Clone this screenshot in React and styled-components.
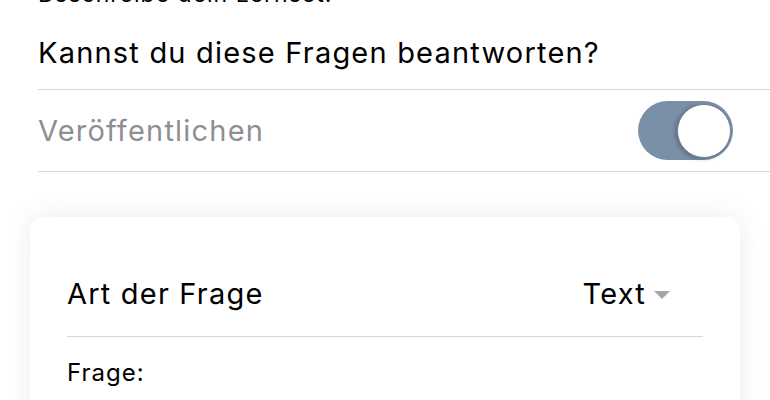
import React from "react";
import styled, { createGlobalStyle } from "styled-components";

const Global = createGlobalStyle`
  html, body { margin: 0; padding: 0; background: #ffffff; }
  body { font-family: Inter, "Noto Sans", sans-serif; color: #000; overflow: hidden; }
`;

const Page = styled.div`
  width: 770px;
  height: 400px;
  overflow: hidden;
`;

const Form = styled.div`
  padding-left: 38px;
  margin-top: -20px;
`;

const Caption = styled.div`
  font-size: 23px;
  line-height: 28px;
  letter-spacing: 1px;
  color: #000;
`;

const Row = styled.div`
  display: flex;
  align-items: center;
  justify-content: space-between;
  box-sizing: border-box;
  height: ${(p) => p.$h}px;
  padding-top: ${(p) => p.$pt || 0}px;
  border-bottom: 1px solid #d7d7d7;
  padding-right: ${(p) => p.$pr || 0}px;
`;

const Label = styled.span`
  font-size: 29px;
  letter-spacing: 1.2px;
  color: ${(p) => (p.$muted ? "#8e8e93" : "#000")};
`;

const Switch = styled.div`
  width: 95px;
  height: 59px;
  border-radius: 30px;
  background: #7a90a7;
  display: flex;
  align-items: center;
  justify-content: flex-end;
  padding-right: 2px;
  box-sizing: border-box;
`;

const Knob = styled.div`
  width: 54px;
  height: 54px;
  border-radius: 50%;
  background: #fff;
  box-sizing: border-box;
  border: 1.5px solid #6d8299;
  box-shadow: -2px 1px 4px rgba(0, 0, 0, 0.25);
`;

const Card = styled.div`
  margin: 45px 30px 0 30px;
  background: #fff;
  border-radius: 14px;
  box-shadow: 0 0 28px rgba(0, 0, 0, 0.08);
  padding: 34px 37px 60px 37px;
`;

const CardRow = styled.div`
  display: flex;
  align-items: center;
  justify-content: space-between;
  height: 85px;
  border-bottom: 1px solid #d7d7d7;
`;

const Select = styled.div`
  display: flex;
  align-items: center;
  gap: 8px;
  padding-right: 33px;
`;

const Arrow = styled.span`
  width: 0;
  height: 0;
  border-left: 8px solid transparent;
  border-right: 8px solid transparent;
  border-top: 8px solid #a5a5a5;
  margin-top: 2px;
`;

const FieldLabel = styled.div`
  font-size: 24px;
  padding-top: 21px;
  letter-spacing: 1px;
`;

export default function App() {
  return (
    <Page>
      <Global />
      <Form>
        <Caption>Beschreibe dein Lernset.</Caption>
        <Row $h={82} $pt={8}>
          <Label>Kannst du diese Fragen beantworten?</Label>
        </Row>
        <Row $h={82} $pr={37}>
          <Label $muted>Veröffentlichen</Label>
          <Switch>
            <Knob />
          </Switch>
        </Row>
      </Form>
      <Card>
        <CardRow>
          <Label>Art der Frage</Label>
          <Select>
            <Label>Text</Label>
            <Arrow />
          </Select>
        </CardRow>
        <FieldLabel>Frage:</FieldLabel>
      </Card>
    </Page>
  );
}
